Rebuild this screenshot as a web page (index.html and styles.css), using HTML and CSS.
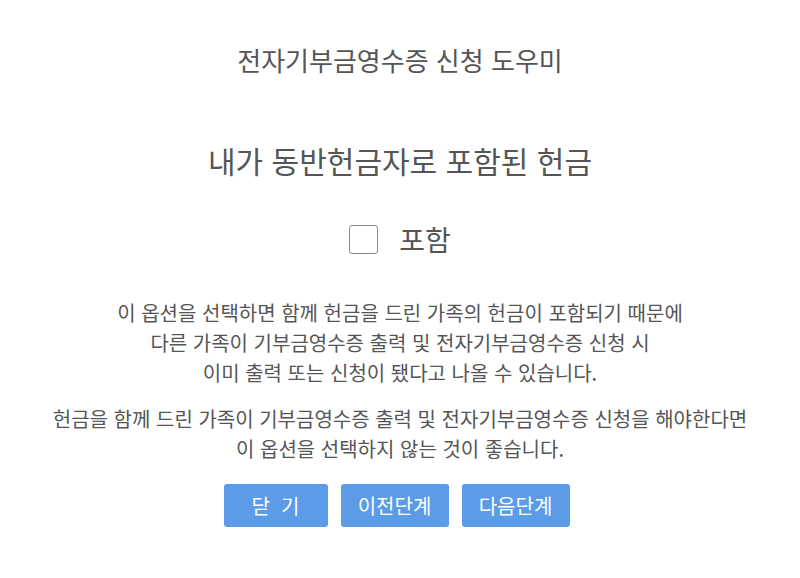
FILE: index.html
```html
<!DOCTYPE html>
<html lang="ko">
<head>
<meta charset="UTF-8">
<meta name="viewport" content="width=device-width, initial-scale=1.0">
<title>전자기부금영수증 신청 도우미</title>
<link rel="stylesheet" href="styles.css">
</head>
<body>

<div id="helper">
  <h1 class="title">전자기부금영수증 신청 도우미</h1>

  <h2 class="question">내가 동반헌금자로 포함된 헌금</h2>

  <label class="option">
    <input type="checkbox" class="check">
    <span class="box"></span>
    <span class="option-text">포함</span>
  </label>

  <p class="note">
    이 옵션을 선택하면 함께 헌금을 드린 가족의 헌금이 포함되기 때문에<br>
    다른 가족이 기부금영수증 출력 및 전자기부금영수증 신청 시<br>
    이미 출력 또는 신청이 됐다고 나올 수 있습니다.
  </p>

  <p class="note">
    헌금을 함께 드린 가족이 기부금영수증 출력 및 전자기부금영수증 신청을 해야한다면<br>
    이 옵션을 선택하지 않는 것이 좋습니다.
  </p>

  <div class="buttons">
    <button class="btn close">닫 &nbsp;기</button>
    <button class="btn prev">이전단계</button>
    <button class="btn next">다음단계</button>
  </div>
</div>

</body>
</html>
```

FILE: styles.css
```css
body {
  font-family: "Noto Sans CJK KR", "Noto Sans", sans-serif;
  margin: 0;
  padding: 0;
  background-color: #fff;
  color: #555;
}

#helper {
  width: 800px;
  padding-top: 42px;
  text-align: center;
}

.title {
  margin: 0;
  font-size: 26px;
  font-weight: normal;
  line-height: 36px;
  color: #555;
}

.question {
  margin: 62px 0 0;
  font-size: 30px;
  font-weight: normal;
  line-height: 40px;
  color: #555;
}

.option {
  display: inline-flex;
  align-items: center;
  height: 36px;
  margin-top: 41px;
  cursor: pointer;
}

.check {
  display: none;
}

.box {
  width: 27px;
  height: 27px;
  border: 1px solid #8a8a8a;
  border-radius: 3px;
  background-color: #fff;
}

.check:checked + .box {
  background-color: #5b9be8;
  border-color: #5b9be8;
}

.option-text {
  margin-left: 21px;
  font-size: 28px;
  line-height: 36px;
}

.note {
  margin: 39px 0 0;
  font-size: 20px;
  line-height: 30px;
}

.note + .note {
  margin-top: 16px;
}

.buttons {
  display: flex;
  justify-content: center;
  gap: 13px;
  margin-top: 20px;
  padding-right: 7px;
}

.btn {
  height: 43px;
  width: 108px;
  padding: 0;
  border: none;
  border-radius: 3px;
  background-color: #5b9be8;
  color: #fff;
  font-family: "Noto Sans CJK KR", sans-serif;
  font-size: 20px;
  cursor: pointer;
}

.btn.close {
  width: 104px;
}

.btn:hover {
  background-color: #4a86d0;
}
```
